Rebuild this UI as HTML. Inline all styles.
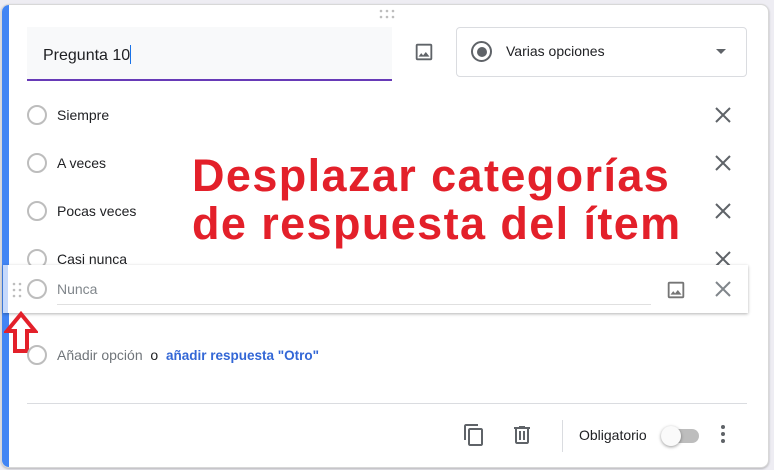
<!DOCTYPE html>
<html><head><meta charset="utf-8"><style>
*{margin:0;padding:0;box-sizing:border-box}
body{width:774px;height:470px;background:#eeedf3;position:relative;overflow:hidden;font-family:"Liberation Sans",Arial,sans-serif}
.card{position:absolute;left:1px;top:4px;width:768px;height:464px;background:#fff;border-radius:8px;border:1px solid #d8d8d8;box-shadow:0 1px 2px rgba(0,0,0,.25);overflow:hidden}
.bar{position:absolute;left:0;top:0;width:7px;height:100%;background:#4285f4}
.abs{position:absolute}
.radio{position:absolute;width:20px;height:20px;border:2px solid #bdbdbd;border-radius:50%}
.opt{position:absolute;font-size:14px;color:#202124}
.x{position:absolute;width:18px;height:18px}
</style></head><body>
<div class="card">
<div class="bar"></div>
</div>
<svg class="abs" style="left:379px;top:9px" width="16" height="10"><g fill="#bdbdbd"><circle cx="2" cy="2" r="1.3"/><circle cx="8" cy="2" r="1.3"/><circle cx="14" cy="2" r="1.3"/><circle cx="2" cy="8" r="1.3"/><circle cx="8" cy="8" r="1.3"/><circle cx="14" cy="8" r="1.3"/></g></svg>
<div class="abs" style="left:27px;top:27px;width:365px;height:54px;background:#f8f9fa;border-bottom:2px solid #673ab7"></div>
<div class="abs" style="left:43px;top:45px;font-size:16px;color:#202124">Pregunta 10<span style="display:inline-block;width:1px;height:19px;background:#1a73e8;vertical-align:-4px"></span></div>
<svg class="abs" style="left:413px;top:41px" width="22" height="22" viewBox="0 0 24 24"><path fill="#5f6368" d="M19 3H5a2 2 0 0 0-2 2v14a2 2 0 0 0 2 2h14a2 2 0 0 0 2-2V5a2 2 0 0 0-2-2zm0 16H5V5h14v14zm-5-7-3 3.7-2-2.5L6 17h12l-4-5z"/></svg>
<div class="abs" style="left:456px;top:27px;width:291px;height:50px;border:1px solid #dadce0;border-radius:4px;background:#fff"></div>
<div class="abs" style="left:471px;top:41px;width:21px;height:21px;border:2px solid #5f6368;border-radius:50%"><div style="position:absolute;left:3.5px;top:3.5px;width:10px;height:10px;border-radius:50%;background:#5f6368"></div></div>
<div class="abs" style="left:506px;top:43px;font-size:14px;color:#202124">Varias opciones</div>
<div class="abs" style="left:716px;top:49px;width:0;height:0;border-left:5px solid transparent;border-right:5px solid transparent;border-top:5px solid #5f6368"></div>
<div class="radio" style="left:27px;top:105px"></div><div class="opt" style="left:57px;top:107px">Siempre</div>
<div class="radio" style="left:27px;top:153px"></div><div class="opt" style="left:57px;top:155px">A veces</div>
<div class="radio" style="left:27px;top:201px"></div><div class="opt" style="left:57px;top:203px">Pocas veces</div>
<div class="radio" style="left:27px;top:249px"></div><div class="opt" style="left:57px;top:251px">Casi nunca</div>
<svg class="x" style="left:714px;top:106px" viewBox="0 0 18 18"><path d="M2 2L16 16M16 2L2 16" stroke="#5f6368" stroke-width="2"/></svg>
<svg class="x" style="left:714px;top:154px" viewBox="0 0 18 18"><path d="M2 2L16 16M16 2L2 16" stroke="#5f6368" stroke-width="2"/></svg>
<svg class="x" style="left:714px;top:202px" viewBox="0 0 18 18"><path d="M2 2L16 16M16 2L2 16" stroke="#5f6368" stroke-width="2"/></svg>
<svg class="x" style="left:714px;top:250px" viewBox="0 0 18 18"><path d="M2 2L16 16M16 2L2 16" stroke="#5f6368" stroke-width="2"/></svg>
<div class="abs" style="left:192px;top:152px;font-size:45px;font-weight:bold;color:#e3202a;line-height:48px;letter-spacing:1.4px;white-space:nowrap">Desplazar categorías<br>de respuesta del ítem</div>
<div class="abs" style="left:3px;top:265px;width:745px;height:48px;background:#fff;box-shadow:0 1px 3px rgba(0,0,0,.3)"></div>
<div class="abs" style="left:3px;top:265px;width:5px;height:48px;background:#c6d9fb"></div>
<svg class="abs" style="left:12px;top:282px" width="10" height="16"><g fill="#bdbdbd"><circle cx="2" cy="2" r="1.3"/><circle cx="8" cy="2" r="1.3"/><circle cx="2" cy="8" r="1.3"/><circle cx="8" cy="8" r="1.3"/><circle cx="2" cy="14" r="1.3"/><circle cx="8" cy="14" r="1.3"/></g></svg>
<div class="radio" style="left:27px;top:279px"></div>
<div class="opt" style="left:57px;top:281px;color:#80868b">Nunca</div>
<div class="abs" style="left:57px;top:304px;width:594px;height:1px;background:#e0e0e0"></div>
<svg class="abs" style="left:665px;top:279px" width="22" height="22" viewBox="0 0 24 24"><path fill="#757575" d="M19 3H5a2 2 0 0 0-2 2v14a2 2 0 0 0 2 2h14a2 2 0 0 0 2-2V5a2 2 0 0 0-2-2zm0 16H5V5h14v14zm-5-7-3 3.7-2-2.5L6 17h12l-4-5z"/></svg>
<svg class="x" style="left:714px;top:280px" viewBox="0 0 18 18"><path d="M2 2L16 16M16 2L2 16" stroke="#80868b" stroke-width="2"/></svg>
<svg class="abs" style="left:4px;top:311px" width="34" height="44" viewBox="0 0 34 44"><path d="M17 3L31 20H23V40H11V20H3Z" fill="#fff" stroke="#e3202a" stroke-width="4" stroke-linejoin="miter"/></svg>
<div class="radio" style="left:27px;top:345px"></div>
<div class="opt" style="left:57px;top:347px;color:#70757a">Añadir opción <span style="color:#202124">&nbsp;o&nbsp;</span> <span style="color:#3367d6;font-weight:bold;font-size:13.5px">añadir respuesta "Otro"</span></div>
<div class="abs" style="left:27px;top:403px;width:720px;height:1px;background:#dadce0"></div>
<svg class="abs" style="left:462px;top:423px" width="24" height="24" viewBox="0 0 24 24"><path fill="#5f6368" d="M16 1H4c-1.1 0-2 .9-2 2v14h2V3h12V1zm3 4H8c-1.1 0-2 .9-2 2v14c0 1.1.9 2 2 2h11c1.1 0 2-.9 2-2V7c0-1.1-.9-2-2-2zm0 16H8V7h11v14z"/></svg>
<svg class="abs" style="left:510px;top:423px" width="24" height="24" viewBox="0 0 24 24"><path fill="#5f6368" d="M15 4V3H9v1H4v2h1v13c0 1.1.9 2 2 2h10c1.1 0 2-.9 2-2V6h1V4h-5zm2 15H7V6h10v13zM9 8h2v9H9zm4 0h2v9h-2z"/></svg>
<div class="abs" style="left:562px;top:420px;width:1px;height:32px;background:#dadce0"></div>
<div class="opt" style="left:579px;top:427px">Obligatorio</div>
<div class="abs" style="left:664px;top:429px;width:35px;height:14px;border-radius:7px;background:#bdbdbd"></div>
<div class="abs" style="left:661px;top:426px;width:20px;height:20px;border-radius:50%;background:#fafafa;box-shadow:0 1px 3px rgba(0,0,0,.4)"></div>
<svg class="abs" style="left:718px;top:424px" width="10" height="22"><g fill="#5f6368"><circle cx="5" cy="3" r="2"/><circle cx="5" cy="10" r="2"/><circle cx="5" cy="17" r="2"/></g></svg>
</body></html>
